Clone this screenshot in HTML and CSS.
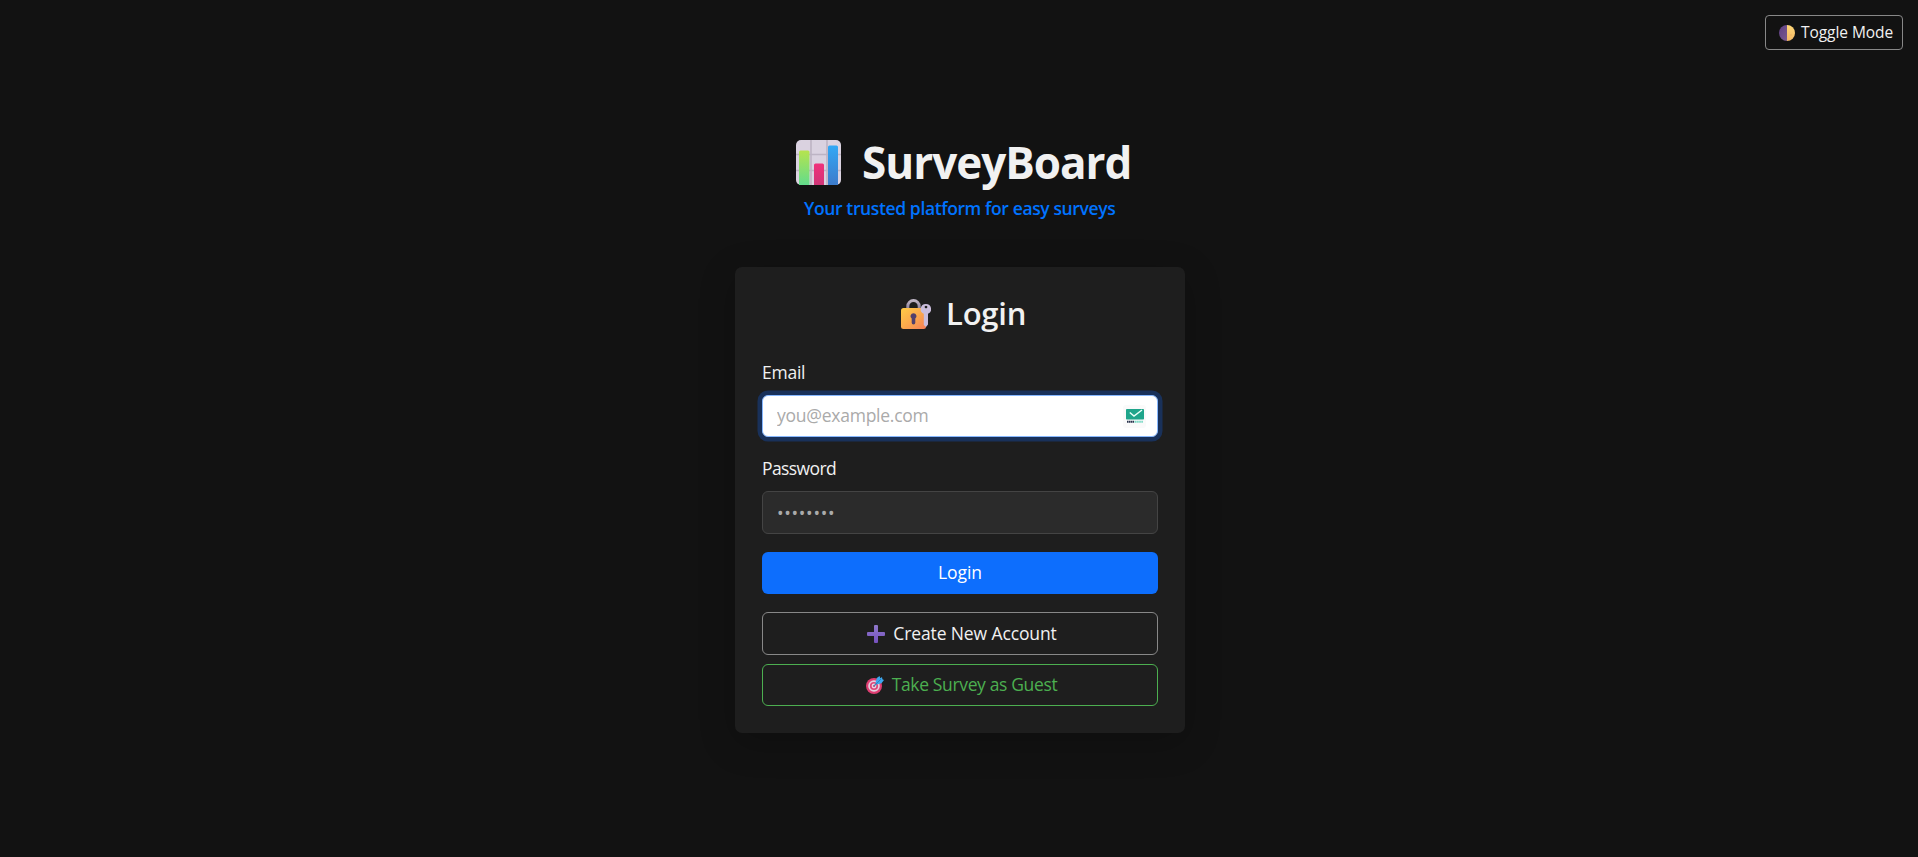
FILE: index.html
```html
<!DOCTYPE html>
<html lang="en">
<head>
<meta charset="utf-8">
<title>SurveyBoard</title>
<link rel="stylesheet" href="styles.css">
</head>
<body>
<div class="topbar">
  <button class="toggle" type="button">
    <svg class="icon-moon" viewBox="0 0 32 32"><defs><linearGradient id="moonL" x1="0" y1="0" x2="1" y2="1"><stop offset="0" stop-color="#5d3d84"/><stop offset="1" stop-color="#7a5b8c"/></linearGradient><linearGradient id="moonR" x1="0" y1="0" x2="0" y2="1"><stop offset="0" stop-color="#ffd878"/><stop offset="1" stop-color="#f5b866"/></linearGradient></defs><path d="M16 0a16 16 0 0 0 0 32z" fill="url(#moonL)"/><path d="M16 0a16 16 0 0 1 0 32z" fill="url(#moonR)"/><circle cx="24" cy="20" r="2.200" fill="#f3b965"/></svg>
    <span class="t-toggle">Toggle Mode</span>
  </button>
</div>
<main class="page">
  <header class="brand">
    <h1 class="brand-title">
      <svg class="icon-chart" viewBox="0 0 45 45"><defs><linearGradient id="g1" x1="0" y1="0" x2="0" y2="1"><stop offset="0" stop-color="#b6e34e"/><stop offset="1" stop-color="#62dc8c"/></linearGradient><linearGradient id="g2" x1="0" y1="0" x2="0" y2="1"><stop offset="0" stop-color="#f0317b"/><stop offset="1" stop-color="#d03577"/></linearGradient><linearGradient id="g3" x1="0" y1="0" x2="0" y2="1"><stop offset="0" stop-color="#32a8f5"/><stop offset="1" stop-color="#3d7bcb"/></linearGradient></defs><rect width="45" height="45" rx="5" fill="#dad2e0"/><path d="M15 0v45M31 0v45M0 14.500h45M0 30.500h45" stroke="#bdb4c4" stroke-width="1.600"/><path d="M3 45V12q0-1.500 1.500-1.500h7.500q1.500 0 1.500 1.500v33z" fill="url(#g1)"/><path d="M18 45V25q0-1.500 1.500-1.500h7q1.500 0 1.500 1.500v20z" fill="url(#g2)"/><path d="M32 45V7q0-1.500 1.500-1.500h7q1.500 0 1.500 1.500v38z" fill="url(#g3)"/></svg>
      <span class="t-brand">SurveyBoard</span>
    </h1>
    <p class="tagline"><span class="t-tag">Your trusted platform for easy surveys</span></p>
  </header>
  <form class="card">
    <h2 class="card-title">
      <svg class="icon-lock" viewBox="0 0 30 30"><defs><linearGradient id="lk" x1="0" y1="0" x2="1" y2="1"><stop offset="0" stop-color="#ffcb46"/><stop offset=".5" stop-color="#fbaa4c"/><stop offset="1" stop-color="#f67d58"/></linearGradient><linearGradient id="sh" gradientUnits="userSpaceOnUse" x1="0" y1="0" x2="0" y2="10"><stop offset="0" stop-color="#c5bccb"/><stop offset="1" stop-color="#8d8098"/></linearGradient></defs><path d="M6.800 10V7.300a5.700 5.700 0 0 1 11.400 0V10" fill="none" stroke="url(#sh)" stroke-width="3"/><rect x="0" y="9" width="25" height="21" rx="2.500" fill="url(#lk)"/><path d="M12.500 14.200a3 3 0 0 1 1.800 5.400v4.200a1.800 1.800 0 0 1-3.600 0v-4.200a3 3 0 0 1 1.800-5.400z" fill="#51406c"/><path fill-rule="evenodd" d="M25 5a5.100 5.100 0 0 1 2 9.800V25.500L25 28l-2.200-2V14.800A5.100 5.100 0 0 1 25 5zm0 1.700a1.300 1.300 0 1 0 .01 0z" fill="#cabddb"/></svg>
      <span class="t-heading">Login</span>
    </h2>
    <label class="label" for="email"><span class="t-email">Email</span></label>
    <div class="field field-focus">
      <input id="email" class="input input-email" type="text" placeholder="you@example.com">
      <span class="mail-badge"><svg class="icon-mail" viewBox="0 0 18 15"><rect width="18" height="10.500" rx=".8" fill="#1fa58b"/><path d="M3.800 3.500L8 7l8-6" fill="none" stroke="#e9fff9" stroke-width="1.500"/><path d="M1 12.800h7" stroke="#28324c" stroke-width="2" stroke-dasharray="1.500 .4"/><path d="M8.500 12.800H17" stroke="#77d8c3" stroke-width="2" stroke-dasharray="1.500 .4"/></svg></span>
    </div>
    <label class="label label-password" for="password"><span class="t-password">Password</span></label>
    <div class="field field-dark">
      <input id="password" class="input input-password" type="password" placeholder="••••••••">
    </div>
    <button class="btn btn-primary" type="button"><span class="t-login">Login</span></button>
    <button class="btn btn-outline" type="button">
      <svg class="icon-btn" viewBox="0 0 18 18"><defs><linearGradient id="pl" x1="0" y1="0" x2="0" y2="1"><stop offset="0" stop-color="#8f79cb"/><stop offset="1" stop-color="#7650bd"/></linearGradient></defs><path d="M8 0h2q1 0 1 1v6h6q1 0 1 1v2q0 1-1 1h-6v6q0 1-1 1H8q-1 0-1-1v-6H1q-1 0-1-1V8q0-1 1-1h6V1q0-1 1-1z" fill="url(#pl)"/></svg>
      <span class="t-create">Create New Account</span>
    </button>
    <button class="btn btn-guest" type="button">
      <svg class="icon-btn" viewBox="0 0 18 18"><circle cx="8" cy="10" r="8" fill="#df3e72"/><circle cx="8" cy="10" r="5.800" fill="#e6cfdf"/><circle cx="8" cy="10" r="4.100" fill="#de477a"/><circle cx="8" cy="10" r="2.400" fill="#ead5e2"/><circle cx="8" cy="10" r="1.100" fill="#d34176"/><path d="M8 10l5-5" stroke="#3d86bd" stroke-width="1.200"/><path d="M9.500 6.500L10.800 2 13.500 0l.8 2.200L16 1l.4 2.200L18 4l-2.500 3.200-5 1.300z" fill="#3ba7ee"/><path d="M10 8l5-5" stroke="#2378ba" stroke-width=".8"/></svg>
      <span class="t-guest">Take Survey as Guest</span>
    </button>
  </form>
</main>
</body>
</html>
```
FILE: styles.css
```css
* { box-sizing: border-box; }
body {
  margin: 0;
  height: 857px;
  overflow: hidden;
  background: #121212;
  color: #f1f1f1;
  font-family: "Open Sans", "Noto Sans", sans-serif;
  font-size: 17.500px;
}
button { font: inherit; cursor: pointer; }
svg { display: block; flex: none; }
span { white-space: nowrap; }
.topbar { display: flex; justify-content: flex-end; padding: 15px 15px 0 0; }
.toggle {
  display: flex;
  align-items: center;
  width: 138px;
  height: 35px;
  padding: 0 0 0 13px;
  gap: 6px;
  background: transparent;
  border: 1px solid #888;
  border-radius: 4px;
  color: #f1f1f1;
  font-size: 15.500px;
}
.t-toggle { padding-bottom: 1px; letter-spacing: -.06px; }
.icon-moon { width: 16px; height: 16px; }
.page {
  display: flex;
  flex-direction: column;
  align-items: center;
  padding: 85px 0 0 2px;
}
.brand { display: flex; flex-direction: column; width: 450px; height: 132px; }
.brand-title {
  display: flex;
  align-items: center;
  height: 54px;
  margin: 0;
  padding-left: 61px;
  gap: 21px;
  font-size: 44px;
  font-weight: 700;
  line-height: 54px;
}
.t-brand { padding-bottom: 1px; letter-spacing: -1px; }
.icon-chart { width: 45px; height: 45px; }
.tagline {
  margin: 6px 0 0;
  padding-left: 69px;
  color: #0073ff;
  font-size: 17.500px;
  font-weight: 600;
  line-height: 26px;
  letter-spacing: -.38px;
}
.card {
  display: flex;
  flex-direction: column;
  width: 450px;
  height: 466px;
  padding: 27px;
  background: #1e1e1e;
  border-radius: 7px;
  box-shadow: 0 9px 36px rgba(0, 0, 0, .22);
}
.card-title {
  display: flex;
  align-items: center;
  height: 40px;
  margin: 0 0 24px;
  padding-left: 139px;
  gap: 15px;
  font-size: 31px;
  font-weight: 600;
  line-height: 40px;
}
.t-heading { padding-bottom: 2px; letter-spacing: -.2px; }
.icon-lock { width: 30px; height: 30px; }
.label { height: 28px; margin-bottom: 9px; line-height: 28px; }
.label-password { margin-top: 17px; }
.t-email { letter-spacing: -.25px; }
.t-password { letter-spacing: -.6px; }
.field {
  display: flex;
  align-items: center;
  border: 1px solid #444;
  border-radius: 6px;
  padding: 0 11px 0 14px;
}
.field-focus {
  height: 42px;
  background: #fff;
  border-color: #86b7fe;
  box-shadow: 0 0 0 4.500px #19315a;
}
.field-dark { height: 43px; background: #2b2b2b; }
.input {
  flex: 1;
  min-width: 0;
  height: 40px;
  padding: 0;
  border: 0;
  outline: 0;
  background: transparent;
  font: inherit;
  color: #aaa;
}
.input::placeholder { color: #aaa; opacity: 1; }
.input-email { padding-bottom: 2px; letter-spacing: -.25px; }
.input-password { letter-spacing: .7px; }
.mail-badge {
  display: flex;
  align-items: center;
  justify-content: center;
  width: 23px;
  height: 23px;
  border-radius: 3px;
  background: #fafafa;
}
.icon-mail { width: 18px; height: 15px; }
.btn {
  display: flex;
  align-items: center;
  justify-content: center;
  width: 396px;
  height: 42px;
  margin: 0;
  padding: 0;
  gap: 8px;
  background: transparent;
  border: 1px solid transparent;
  border-radius: 6px;
  color: #f1f1f1;
}
.btn-primary { margin-top: 18px; background: #0d6efd; color: #fff; }
.btn-outline { height: 43px; margin-top: 18px; padding-left: 4px; border-color: #888; }
.btn-guest { margin-top: 9px; padding-left: 3px; border-color: #4caf50; color: #4caf50; }
.t-login { padding-bottom: 2px; letter-spacing: -.1px; }
.t-create { padding-bottom: 2px; letter-spacing: -.12px; }
.t-guest { padding-bottom: 2px; letter-spacing: -.36px; }
.icon-btn { width: 18px; height: 18px; }
```
